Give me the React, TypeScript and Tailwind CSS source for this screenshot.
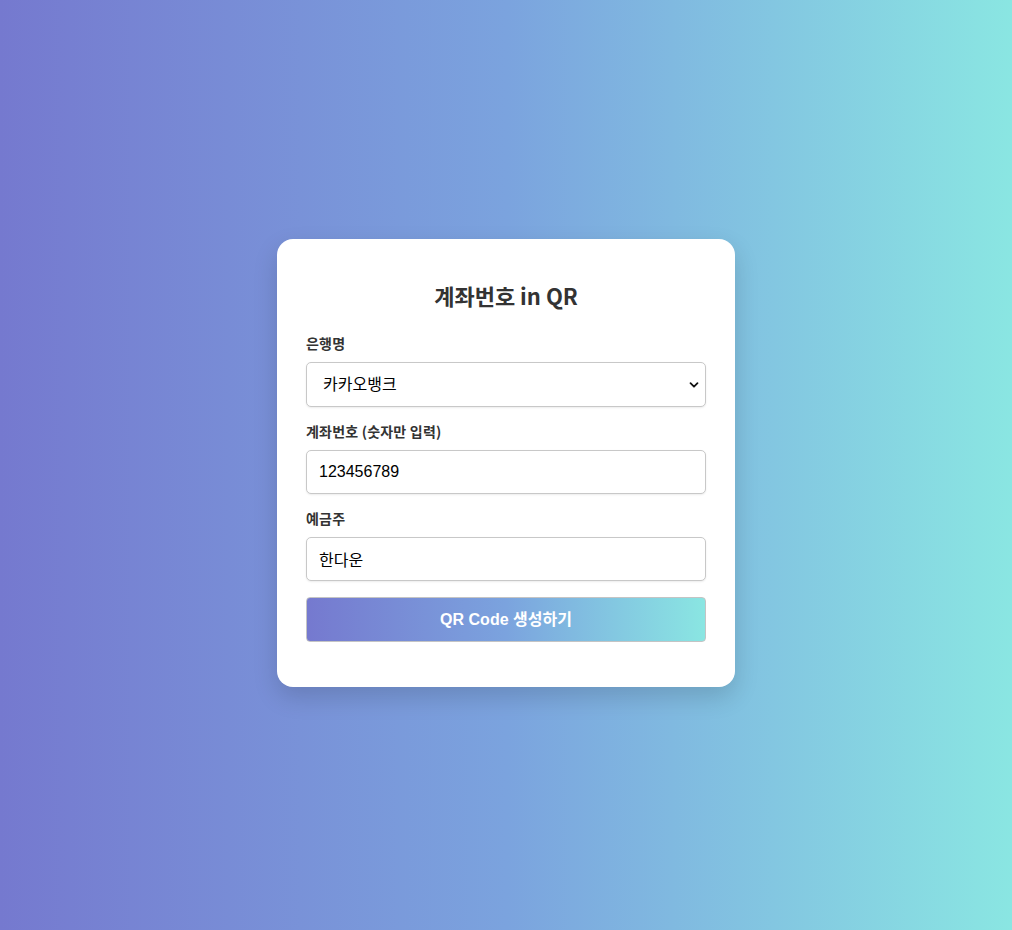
import { useState } from 'react';

const banks = ['카카오뱅크', '국민은행', '신한은행', '우리은행', '하나은행', '농협은행', '토스뱅크'];

export default function App() {
  const [bank, setBank] = useState('카카오뱅크');
  const [account, setAccount] = useState('123456789');
  const [owner, setOwner] = useState('한다운');

  const labelCls = "block text-[14px] leading-[20px] font-bold text-[#333] mb-[9px] tracking-[0.2px]";
  const inputCls = "block w-full h-[44px] px-[12px] border border-[#c8c8c8] rounded-[5px] bg-white text-[16px] text-black shadow-[0_1px_2px_rgba(0,0,0,0.08)] outline-none";

  return (
    <div
      className="min-h-screen flex items-center justify-center pb-[4px] bg-gradient-to-r from-[#7579cf] via-[#7ba3de] to-[#8ae6e2]"
      style={{ fontFamily: '"Liberation Sans", "Noto Sans CJK KR", sans-serif' }}
    >
      <div className="w-[458px] bg-white rounded-[16px] px-[29px] pt-[30px] pb-[45px] shadow-[0_10px_25px_rgba(0,0,0,0.15)]">
        <h2
          className="mt-[11px] mb-[23px] text-center text-[22px] leading-[30px] font-bold text-[#333]"
          style={{ fontFamily: '"Noto Sans CJK KR", "Noto Sans", sans-serif' }}
        >
          계좌번호 in QR
        </h2>

        <form onSubmit={(e) => e.preventDefault()}>
          <label className={labelCls} style={{ fontFamily: '"Noto Sans CJK KR", sans-serif' }}>은행명</label>
          <div className="relative mb-[14px]">
            <select
              value={bank}
              onChange={(e) => setBank(e.target.value)}
              className="block w-full h-[45px] pl-[16px] pr-[30px] border border-[#c8c8c8] rounded-[5px] bg-white text-[16px] text-black shadow-[0_1px_2px_rgba(0,0,0,0.08)] appearance-none outline-none"
            >
              {banks.map((b) => (
                <option key={b} value={b}>{b}</option>
              ))}
            </select>
            <svg className="absolute right-[7px] top-1/2 -translate-y-1/2 pointer-events-none" width="10" height="10" viewBox="0 0 10 10">
              <path d="M1.5 3.2 L5 6.7 L8.5 3.2" fill="none" stroke="#111" strokeWidth="1.8" strokeLinecap="round" strokeLinejoin="round" />
            </svg>
          </div>

          <label className={labelCls} style={{ fontFamily: '"Noto Sans CJK KR", sans-serif' }}>계좌번호 (숫자만 입력)</label>
          <input
            type="text"
            value={account}
            onChange={(e) => setAccount(e.target.value.replace(/[^0-9]/g, ''))}
            className={inputCls + " mb-[14px]"}
          />

          <label className={labelCls} style={{ fontFamily: '"Noto Sans CJK KR", sans-serif' }}>예금주</label>
          <input
            type="text"
            value={owner}
            onChange={(e) => setOwner(e.target.value)}
            className={inputCls + " mb-[16px]"}
          />

          <button
            type="submit"
            className="block w-full h-[45px] border border-[#c4c4c4] rounded-[4px] bg-gradient-to-r from-[#7579cf] via-[#7ba3de] to-[#8ae6e2] text-white text-[16px] font-bold"
          >
            QR Code 생성하기
          </button>
        </form>
      </div>
    </div>
  );
}
